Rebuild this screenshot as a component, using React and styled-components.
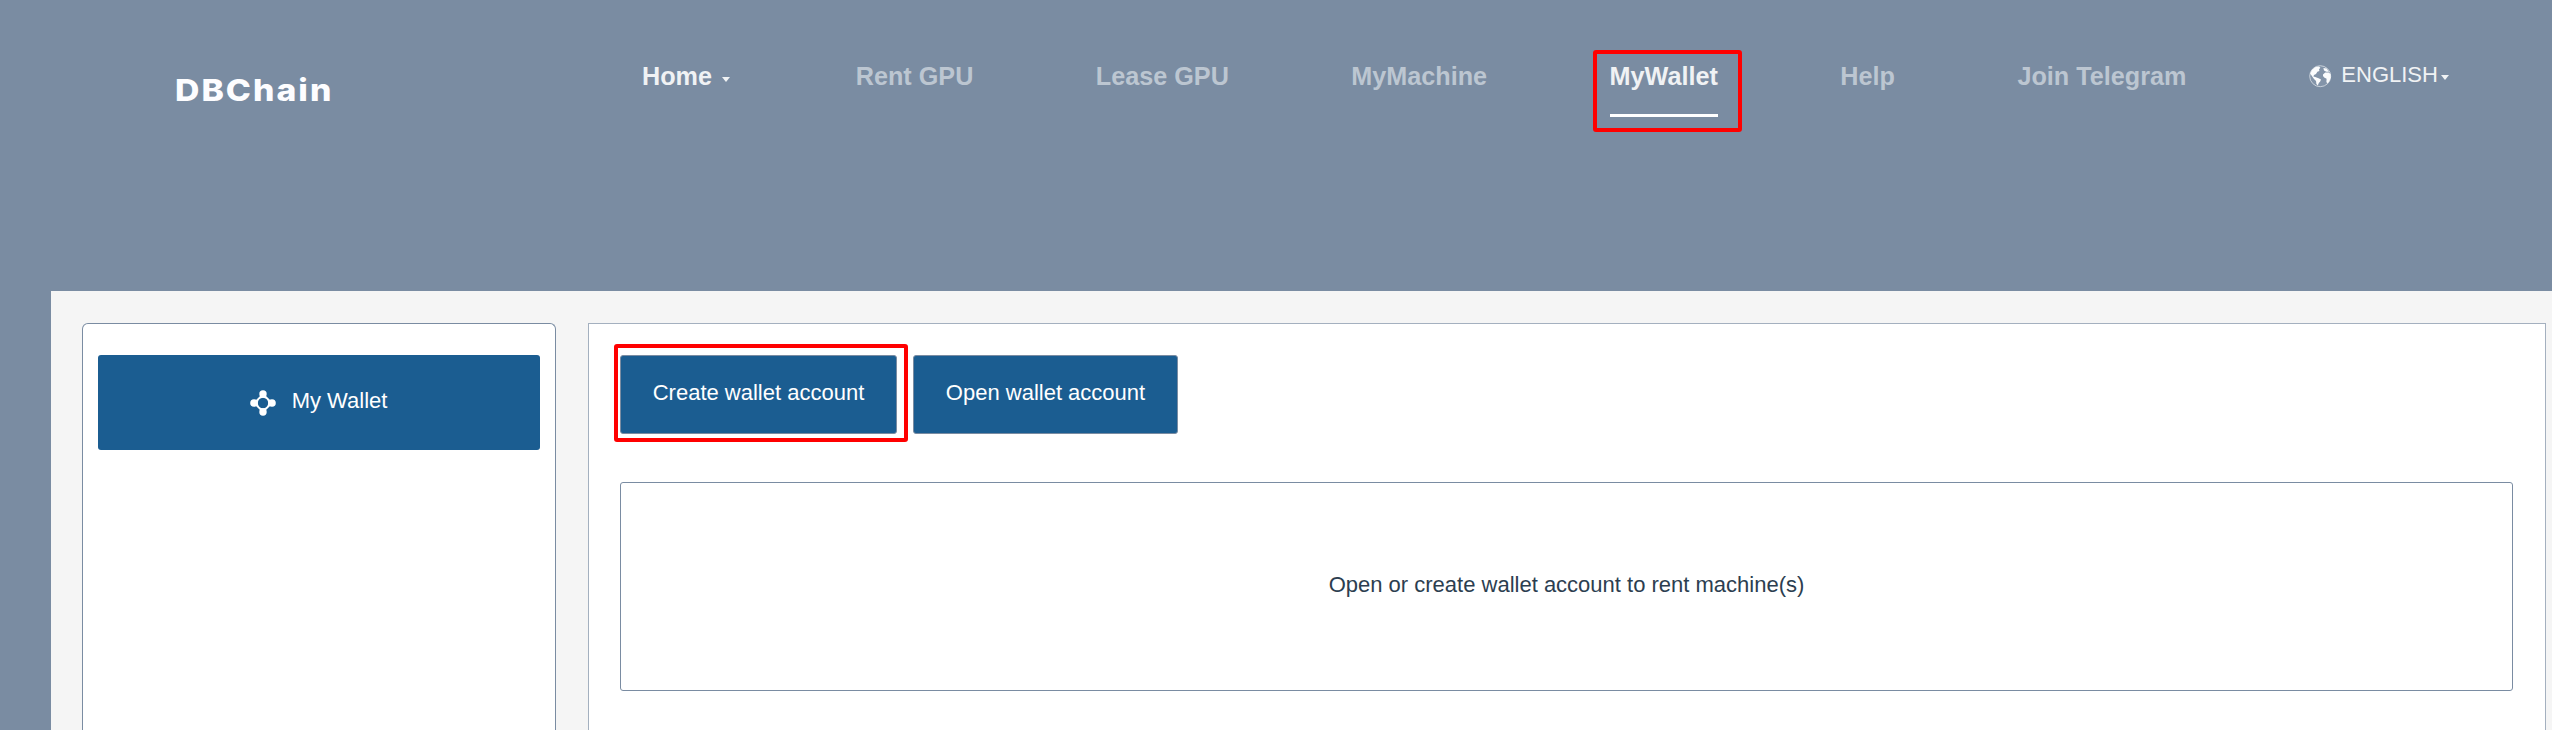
import React from "react";
import styled, { createGlobalStyle } from "styled-components";

const GlobalStyle = createGlobalStyle`
  * { box-sizing: border-box; }
  body {
    margin: 0;
    background: #7a8ca2;
    font-family: "Liberation Sans", Arial, sans-serif;
    font-size: 22px;
    color: #2c3e50;
    overflow: hidden;
  }
`;

const Page = styled.div`
  height: 730px;
  display: flex;
  flex-direction: column;
  overflow: hidden;
`;

const Header = styled.header`
  height: 291px;
  flex: none;
  display: flex;
  align-items: flex-start;
  padding-left: 175px;
`;

const Logo = styled.div`
  width: 467px;
  flex: none;
  padding-top: 71px;
  font-family: Inter, sans-serif;
  font-size: 30px;
  line-height: 38px;
  font-weight: 800;
  letter-spacing: 1.8px;
  color: #fdfdff;
  transform: scaleX(1.125);
  transform-origin: 0 0;
`;

const Nav = styled.nav`
  display: flex;
  gap: 122.5px;
  padding-top: 60px;
`;

const NavItem = styled.a`
  position: relative;
  flex: none;
  display: flex;
  height: 57px;
  font-size: 25.2px;
  line-height: 32px;
  font-weight: 700;
  white-space: nowrap;
  color: ${(p) => (p.$bright ? "#f0f2f4" : "#bcc6d1")};
  border-bottom: 3px solid ${(p) => (p.$active ? "#fff" : "transparent")};
`;

const Caret = styled.span`
  width: 0;
  height: 0;
  border: 4px solid transparent;
  border-top: 5px solid #f0f2f4;
  border-bottom: 0;
  margin: ${(p) => p.$margin};
`;

const Language = styled.div`
  display: flex;
  flex: none;
  margin-left: 0.5px;
  line-height: 30px;
  color: #f0f2f4;
  svg { margin: 5px 9px 0 0; }
`;

const Highlight = styled.span`
  position: absolute;
  inset: ${(p) => p.$inset};
  border: 4px solid #f00;
  border-radius: 3px;
  pointer-events: none;
`;

const Main = styled.main`
  flex: 1;
  margin-left: 51px;
  padding: 32px 6px 0 31px;
  display: flex;
  gap: 32px;
  background: #f5f5f5;
`;

const Sidebar = styled.aside`
  width: 474px;
  flex: none;
  padding: 31px 15px;
  background: #fff;
  border: 1px solid #7a8ca2;
  border-bottom: 0;
  border-radius: 6px 6px 0 0;
`;

const SideLink = styled.a`
  height: 95px;
  display: flex;
  align-items: center;
  justify-content: center;
  gap: 16px;
  padding-right: 1px;
  border-radius: 3px;
  background: #1b5d91;
  color: #fff;
  line-height: 26px;
  span { padding-bottom: 3px; }
`;

const Content = styled.section`
  flex: 1;
  padding: 31px 32px 0 31px;
  background: #fff;
  border: 1px solid #a4b0bf;
  border-bottom: 0;
`;

const Actions = styled.div`
  display: flex;
  gap: 16px;
  margin-bottom: 48px;
`;

const ActionButton = styled.button`
  position: relative;
  width: ${(p) => p.$width}px;
  height: 79px;
  padding: 0 0 3px;
  border: 1px solid #7a8ca2;
  border-radius: 3px;
  background: #1b5d91;
  color: #fff;
  font: inherit;
  white-space: nowrap;
`;

const EmptyState = styled.div`
  height: 209px;
  display: flex;
  align-items: center;
  justify-content: center;
  padding-bottom: 4px;
  border: 1px solid #7a8ca2;
  border-radius: 3px;
`;

const GlobeIcon = () => (
  <svg width="23" height="23" viewBox="0 0 23 23">
    <circle cx="11.2" cy="11.2" r="10.5" fill="#8394a9" stroke="#c9d1da" strokeWidth="1" />
    <path
      fill="#fbfcfd"
      d="M1.2 8.5 3 4.8 6.5 2 10 1.4l1.4 1.4-1.4 1.4.4 1.8-2 .8-1.4 2.2-2 1-.6 1.4 1.8.6 3.4 1.2 2.4 1.2-.8 2.2-1.4 1.4-1 2.6-1.4-1.6-.4-3-2-2-1.8-2.6ZM14.4 3l3.2.6 2.4 3.2-2.6 0-2.4-1.4ZM14 9.4l2.2-2 3.6.2 1.8 1.6.2 3.2-1.4 3.8-2 2.4-1-1.6.2-3.2-2.4-1.2-1.2-1.6Z"
    />
  </svg>
);

const NodesIcon = () => (
  <svg width="26" height="26" viewBox="0 0 26 26">
    <path d="M13 4 22 13 13 22 4 13Z" fill="#fff" stroke="#fff" strokeWidth="1.5" />
    <circle cx="13" cy="13" r="5.2" fill="#1b5d91" />
    <g fill="#fff">
      <circle cx="13" cy="4" r="3.7" />
      <circle cx="4" cy="13" r="3.8" />
      <circle cx="22" cy="13" r="3.8" />
      <circle cx="13" cy="22" r="3.7" />
    </g>
  </svg>
);

const links = ["Rent GPU", "Lease GPU", "MyMachine", "MyWallet", "Help", "Join Telegram"];

export default function App() {
  return (
    <Page>
      <GlobalStyle />
      <Header>
        <Logo>DBChain</Logo>
        <Nav>
          <NavItem $bright>
            Home
            <Caret $margin="17px 3.3px 0 10px" />
          </NavItem>
          {links.map((label) => {
            const active = label === "MyWallet";
            return (
              <NavItem key={label} $bright={active} $active={active}>
                {label}
                {active && <Highlight $inset="-10px -24px -18px -17px" />}
              </NavItem>
            );
          })}
          <Language>
            <GlobeIcon />
            ENGLISH
            <Caret $margin="15px 0 0 3px" />
          </Language>
        </Nav>
      </Header>
      <Main>
        <Sidebar>
          <SideLink>
            <NodesIcon />
            <span>My Wallet</span>
          </SideLink>
        </Sidebar>
        <Content>
          <Actions>
            <ActionButton $width={277}>
              Create wallet account
              <Highlight $inset="-12px -12px -9px -7px" />
            </ActionButton>
            <ActionButton $width={265}>Open wallet account</ActionButton>
          </Actions>
          <EmptyState>Open or create wallet account to rent machine(s)</EmptyState>
        </Content>
      </Main>
    </Page>
  );
}
